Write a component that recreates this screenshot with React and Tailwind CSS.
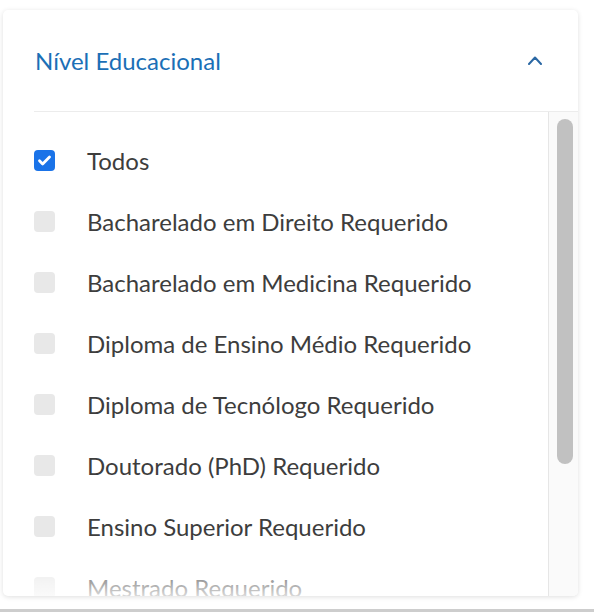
import { useState } from 'react';

const levels = [
  'Todos',
  'Bacharelado em Direito Requerido',
  'Bacharelado em Medicina Requerido',
  'Diploma de Ensino Médio Requerido',
  'Diploma de Tecnólogo Requerido',
  'Doutorado (PhD) Requerido',
  'Ensino Superior Requerido',
  'Mestrado Requerido',
];

function Checkbox({ checked }) {
  return (
    <span
      className={`w-[21px] h-[21px] rounded-[4px] flex items-center justify-center shrink-0 ${
        checked ? 'bg-[#1a73e8]' : 'bg-[#e8e8e8]'
      }`}
    >
      {checked && (
        <svg className="w-[15px] h-[15px]" viewBox="0 0 24 24" fill="none" stroke="white" strokeWidth={4.5} strokeLinecap="round" strokeLinejoin="round">
          <path d="M4 12.5l5 5L20 6.5" />
        </svg>
      )}
    </span>
  );
}

export default function App() {
  const [selected, setSelected] = useState(['Todos']);

  const toggle = (label) => {
    setSelected(prev => (prev.includes(label) ? prev.filter(l => l !== label) : [...prev, label]));
  };

  return (
    <div className="w-[594px] h-[612px] bg-white flex flex-col" style={{ fontFamily: 'Lato, "Noto Sans", sans-serif' }}>
      {/* Filter card */}
      <div className="ml-[3px] mt-[10px] w-[575px] h-[586px] bg-white rounded-[5px] shadow-[0_1px_5px_rgba(0,0,0,0.13)] flex flex-col overflow-hidden">
        <div className="h-[101px] shrink-0 pl-[32px] pr-[36px] flex items-center justify-between">
          <span className="text-[24px] text-[#1b6fb6] leading-none">Nível Educacional</span>
          <svg className="w-[14px] h-[9px]" viewBox="0 0 14 9" fill="none" stroke="#2b68a4" strokeWidth={2} strokeLinecap="round" strokeLinejoin="round">
            <path d="M1 8l6-6.5L13 8" />
          </svg>
        </div>

        <div className="ml-[31px] flex-1 flex border-t border-[#ececec] min-h-0">
          <div className="relative flex-1 border-r border-[#e6e6e6] overflow-hidden pt-[18px] pl-[0px]">
            {levels.map(label => (
              <div
                key={label}
                onClick={() => toggle(label)}
                className="h-[61px] flex items-center gap-[32px] cursor-pointer"
              >
                <Checkbox checked={selected.includes(label)} />
                <span className="text-[24px] text-[#3d3d3d] whitespace-nowrap">{label}</span>
              </div>
            ))}
            <div className="absolute left-0 right-0 bottom-0 h-[40px] bg-linear-to-b from-white/0 to-white/80 pointer-events-none" />
          </div>
          {/* scrollbar */}
          <div className="w-[29px] shrink-0 bg-[#fafafa] pt-[7px] pl-[8px]">
            <div className="w-[16px] h-[345px] rounded-full bg-[#c1c1c1]" />
          </div>
        </div>
      </div>
      <div className="flex-1" />
      <div className="h-[3px] bg-[#cdcdcd]" />
    </div>
  );
}
